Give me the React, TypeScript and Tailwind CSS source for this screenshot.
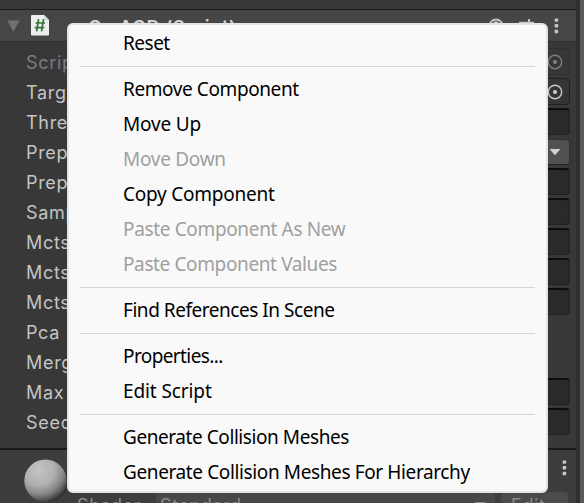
import React from "react";

type FieldKind = "object" | "objectDim" | "text" | "dropdown" | "none";

const properties: { label: string; kind: FieldKind }[] = [
  { label: "Script", kind: "objectDim" },
  { label: "Target", kind: "object" },
  { label: "Threshold", kind: "text" },
  { label: "Preprocess", kind: "dropdown" },
  { label: "Prep Resolution", kind: "text" },
  { label: "Sample Resolution", kind: "text" },
  { label: "Mcts Nodes", kind: "text" },
  { label: "Mcts Iterations", kind: "text" },
  { label: "Mcts Max Depth", kind: "text" },
  { label: "Pca", kind: "none" },
  { label: "Merge", kind: "none" },
  { label: "Max Hulls", kind: "text" },
  { label: "Seed", kind: "text" },
];

type Entry = { label: string; spacing: string; disabled?: boolean };

const groups: Entry[][] = [
  [{ label: "Reset", spacing: "tracking-[-0.5px]" }],
  [
    { label: "Remove Component", spacing: "tracking-[-0.41px]" },
    { label: "Move Up", spacing: "tracking-[-0.17px]" },
    { label: "Move Down", spacing: "tracking-[-0.28px]", disabled: true },
    { label: "Copy Component", spacing: "tracking-[-0.24px]" },
    { label: "Paste Component As New", spacing: "tracking-[-0.35px]", disabled: true },
    { label: "Paste Component Values", spacing: "tracking-[-0.38px]", disabled: true },
  ],
  [{ label: "Find References In Scene", spacing: "tracking-[-0.46px]" }],
  [
    { label: "Properties...", spacing: "tracking-[-0.6px]" },
    { label: "Edit Script", spacing: "tracking-[-0.1px]" },
  ],
  [
    { label: "Generate Collision Meshes", spacing: "tracking-[-0.43px]" },
    { label: "Generate Collision Meshes For Hierarchy", spacing: "tracking-[-0.38px]" },
  ],
];

function Dots() {
  return (
    <svg width="5" height="16" viewBox="0 0 5 16" fill="#c8c8c8" className="shrink-0">
      <rect x="0.6" y="0.4" width="3.6" height="3.4" rx="1" />
      <rect x="0.6" y="6.1" width="3.6" height="3.4" rx="1" />
      <rect x="0.6" y="11.8" width="3.6" height="3.4" rx="1" />
    </svg>
  );
}

function Field({ kind }: { kind: FieldKind }) {
  if (kind === "none") return null;
  if (kind === "text") {
    return (
      <div className="h-[27px] flex-1 rounded-[4px] border border-t-2 border-[#212121] border-t-[#0d0d0d] bg-[#2a2a2a]" />
    );
  }
  if (kind === "dropdown") {
    return (
      <div className="mt-px flex h-[26px] flex-1 items-center justify-end rounded-[4px] border border-[#303030] border-b-[#242424] bg-[#515151] pr-[8px]">
        <svg width="12" height="8" viewBox="0 0 12 8">
          <path d="M0.5 1h11L6 7.2z" fill="#d0d0d0" />
        </svg>
      </div>
    );
  }
  const dim = kind === "objectDim";
  return (
    <div
      className={
        "flex h-[27px] flex-1 items-center justify-end rounded-[4px] border pr-[6px] " +
        (dim ? "border-[#303030] bg-[#373737]" : "border-[#202020] bg-[#353535]")
      }
    >
      <svg width="16" height="16" viewBox="0 0 16 16">
        <circle cx="8" cy="8" r="6.7" fill="none" stroke={dim ? "#7d7d7d" : "#c8c8c8"} strokeWidth="1.4" />
        <circle cx="8" cy="8" r="2" fill={dim ? "#858585" : "#d0d0d0"} />
      </svg>
    </div>
  );
}

function Inspector() {
  return (
    <div className="flex h-full w-[576px] flex-col bg-[#383838] font-['Inter','Liberation_Sans',sans-serif] text-[#c4c4c4]">
      <div className="h-[10px] shrink-0 border-b border-[#1a1a1a]" />
      <div className="flex h-8 shrink-0 items-center border-b border-[#303030] bg-[#464646]">
        <svg width="13" height="12" viewBox="0 0 13 12" className="ml-[7px] mt-px shrink-0">
          <path d="M0.2 0.5h12.5L6.4 11.5z" fill="#707070" />
        </svg>
        <svg width="18" height="21" viewBox="0 0 18 21" className="ml-[11px] shrink-0">
          <path d="M1 0h12l5 5v14.5a1 1 0 0 1-1 1H1a1 1 0 0 1-1-1V1a1 1 0 0 1 1-1z" fill="#eeeeee" />
          <path d="M13 0l5 5h-4a1 1 0 0 1-1-1z" fill="#d6d6d6" />
          <path d="M7.6 4.2L5.6 16.4M12.5 4.2L10.5 16.4M4.6 8h9.4M3.8 12.6h9.4" fill="none" stroke="#337437" strokeWidth="1.7" />
        </svg>
        <div className="ml-[39px] flex-1 whitespace-nowrap pt-[3px] text-[18.5px] font-semibold leading-[27px] tracking-[0.5px] text-[#d2d2d2]">
          Co ACD (Script)
        </div>
        <svg width="16" height="16" viewBox="0 0 16 16" fill="none" stroke="#c4c4c4" className="mr-[14px] mt-px shrink-0">
          <circle cx="8" cy="8" r="6.5" strokeWidth="2" />
          <path d="M5.8 6.2a2.3 2.3 0 1 1 3 2.4c-.5.2-.8.5-.8 1.3M8 11.5v1.5" strokeWidth="1.7" />
        </svg>
        <svg width="16" height="16" viewBox="0 0 16 16" fill="none" stroke="#c4c4c4" className="mr-[20px] shrink-0">
          <path d="M1 4.8h15M11 1v6.5M1 11.5h15M5 8.5v6" strokeWidth="2" />
        </svg>
        <Dots />
        <div className="w-[17px] shrink-0" />
      </div>
      <div className="flex h-[406px] shrink-0 flex-col pt-[5px]">
        {properties.map((p, i) => (
          <div key={i} className="flex h-[30px] shrink-0 items-start pl-[26px] pr-[6px] pt-px">
            <div
              className={
                "w-[230px] whitespace-nowrap text-[18px] leading-[29px] tracking-[0.7px] " +
                (p.kind === "objectDim" ? "text-[#7c7c7c]" : "")
              }
            >
              {p.label}
            </div>
            <Field kind={p.kind} />
          </div>
        ))}
      </div>
      <div className="flex h-[55px] shrink-0 border-t-2 border-[#1a1a1a] bg-[#3d3d3d]">
        <svg width="44" height="44" viewBox="0 0 44 44" className="ml-[24px] mt-[9px] shrink-0">
          <defs>
            <radialGradient id="ball" cx="0.35" cy="0.25" r="0.8">
              <stop offset="0" stopColor="#c4c4c6" />
              <stop offset="0.45" stopColor="#b0b0b2" />
              <stop offset="0.72" stopColor="#868688" />
              <stop offset="1" stopColor="#303030" />
            </radialGradient>
          </defs>
          <circle cx="23" cy="22" r="21" fill="#303030" />
          <circle cx="21.5" cy="21.7" r="21.2" fill="url(#ball)" />
        </svg>
        <div className="flex flex-1 flex-col">
          <div className="flex h-[42px] shrink-0 justify-end pr-[9px] pt-[10px]">
            <Dots />
          </div>
          <div className="flex h-[28px] shrink-0 pl-[9px] pr-2 text-[18px] leading-[27px] tracking-[0.6px] text-[#8a8a8a]">
            <div className="w-[79px]">Shader</div>
            <div className="flex w-[339px] items-start justify-between rounded-[4px] bg-[#484848] pl-[4px] pr-[9px]">
              <span>Standard</span>
              <svg width="11" height="7" viewBox="0 0 11 7" className="mt-[10px]">
                <path d="M0 0h11L5.5 6z" fill="#929292" />
              </svg>
            </div>
            <div className="ml-[6px] flex-1 rounded-[4px] bg-[#4b4b4b] pl-[10px]">Edit...</div>
          </div>
        </div>
      </div>
    </div>
  );
}

function ContextMenu() {
  return (
    <div className="absolute left-[67px] top-[23px] h-[470px] w-[481px] rounded-[6px] border-2 border-[#e3e4e4] bg-[#f9f9f9] pt-px font-['Noto_Sans','Open_Sans',sans-serif] text-[19px]">
      {groups.map((group, i) => (
        <div key={i}>
          {i > 0 && (
            <div className="flex h-[11px] items-center px-[11px]">
              <div className="h-px w-full bg-[#d5d5d5]" />
            </div>
          )}
          {group.map((e) => (
            <div
              key={e.label}
              className={
                "flex h-[35px] items-center whitespace-nowrap pl-[54px] " +
                e.spacing +
                (e.disabled ? " text-[#a0a0a0]" : " text-black")
              }
            >
              {e.label}
            </div>
          ))}
        </div>
      ))}
    </div>
  );
}

export default function App() {
  return (
    <div className="relative flex h-[503px] w-[584px] overflow-hidden bg-[#5b5b5b]">
      <Inspector />
      <div className="w-1 bg-[#303030]" />
      <ContextMenu />
    </div>
  );
}
